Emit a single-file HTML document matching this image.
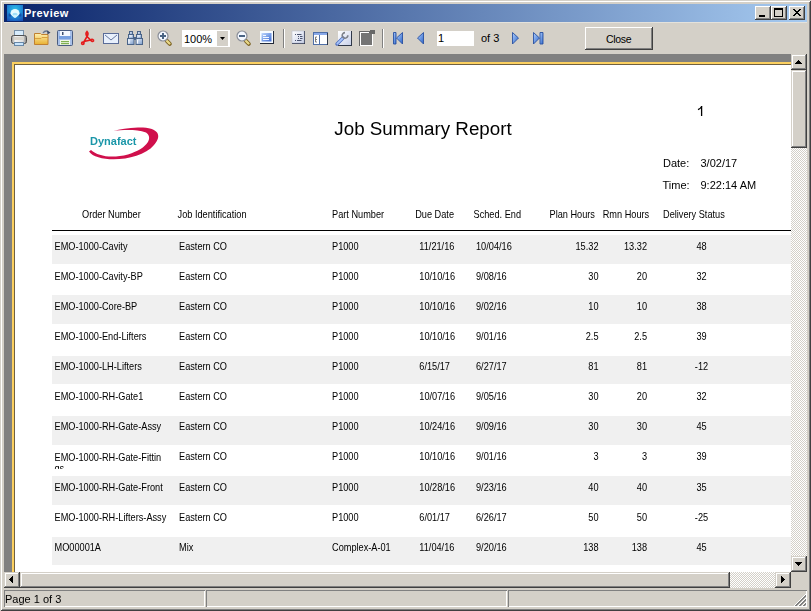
<!DOCTYPE html>
<html><head><meta charset="utf-8">
<style>
*{margin:0;padding:0;box-sizing:border-box}
html,body{width:811px;height:611px;overflow:hidden;background:#d4d0c8;font-family:"Liberation Sans",sans-serif}
.a{position:absolute}
#win{position:absolute;left:0;top:0;width:811px;height:611px;background:#d4d0c8;
 box-shadow: inset 1px 1px 0 #d4d0c8, inset -1px -1px 0 #404040, inset 2px 2px 0 #fff, inset -2px -2px 0 #808080;}
#title{left:4px;top:4px;width:803px;height:18px;background:linear-gradient(to right,#0a246a,#a6caf0)}
#title .t{left:20px;top:2px;color:#fff;font-weight:bold;font-size:11px;line-height:14px;letter-spacing:0.45px}
.cb{width:16px;height:14px;top:2px;background:#d4d0c8;box-shadow: inset -1px -1px 0 #404040, inset 1px 1px 0 #fff, inset -2px -2px 0 #808080}
.sb{background:#d4d0c8;box-shadow: inset -1px -1px 0 #404040, inset 1px 1px 0 #d4d0c8, inset -2px -2px 0 #808080, inset 2px 2px 0 #fff}
.track{background-color:#fff;background-image:linear-gradient(45deg,#d4d0c8 25%,transparent 25%,transparent 75%,#d4d0c8 75%),linear-gradient(45deg,#d4d0c8 25%,transparent 25%,transparent 75%,#d4d0c8 75%);background-size:2px 2px;background-position:0 0,1px 1px}
.sunk{box-shadow: inset 1px 1px 0 #808080, inset -1px -1px 0 #fff}
.tx{position:absolute;white-space:nowrap;color:#000}
.g{background:#f0f0f0}
.ui{position:absolute;font-size:11px;line-height:13px;color:#000;white-space:nowrap}
</style></head><body>
<div id="win">
 <div id="title" class="a">
  <svg class="a" style="left:3px;top:1px" width="16" height="16" viewBox="0 0 16 16">
   <defs><radialGradient id="ig" cx="0.5" cy="0.3" r="0.8"><stop offset="0" stop-color="#30c0e8"/><stop offset="0.5" stop-color="#2090d8"/><stop offset="1" stop-color="#1850b8"/></radialGradient>
   <radialGradient id="ig3" cx="0.5" cy="0.5" r="0.5"><stop offset="0" stop-color="#0c3898" stop-opacity="0.9"/><stop offset="1" stop-color="#0c3898" stop-opacity="0"/></radialGradient></defs>
   <rect x="0" y="0" width="16" height="16" fill="url(#ig)"/>
   <ellipse cx="3" cy="10" rx="2.2" ry="2.8" fill="url(#ig3)"/>
   <ellipse cx="13" cy="10" rx="2.2" ry="2.8" fill="url(#ig3)"/>
   <path d="M3.4 8.6 A4.6 4.6 0 0 1 12.6 8.6 Q12.2 10.6 8 13 Q3.8 10.6 3.4 8.6 Z" fill="#e4faff"/>
   <ellipse cx="8" cy="9.2" rx="2.6" ry="1.5" fill="#a0e0f8"/>
   <ellipse cx="8" cy="11.2" rx="1.8" ry="1.3" fill="#d0f4ff"/>
  </svg>
  <div class="a t">Preview</div>
  <div class="a cb" style="left:751px"><div class="a" style="left:4px;top:9px;width:6px;height:2px;background:#000"></div></div>
  <div class="a cb" style="left:767px"><div class="a" style="left:3px;top:2px;width:9px;height:9px;border:1px solid #000;border-top-width:2px"></div></div>
  <div class="a cb" style="left:785px">
   <svg class="a" style="left:4px;top:3px" width="8" height="7" viewBox="0 0 8 7" shape-rendering="crispEdges">
    <path d="M0 0h2v1h-2zM6 0h2v1h-2zM1 1h2v1h-2zM5 1h2v1h-2zM2 2h4v1h-4zM3 3h2v1h-2zM2 4h4v1h-4zM1 5h2v1h-2zM5 5h2v1h-2zM0 6h2v1h-2zM6 6h2v1h-2z" fill="#000"/>
   </svg>
  </div>
 </div>

 <!-- TOOLBAR -->
 <div class="a" style="left:4px;top:22px;width:803px;height:1px;background:#e4e2dc"></div>
 <svg class="a" style="left:0;top:22px" width="811" height="32" viewBox="0 22 811 32">
  <defs>
   <linearGradient id="gBlue" x1="0" y1="0" x2="1" y2="1"><stop offset="0" stop-color="#f0f6ff"/><stop offset="1" stop-color="#7a9ac8"/></linearGradient>
   <linearGradient id="gFold" x1="0" y1="0" x2="0" y2="1"><stop offset="0" stop-color="#fff0b0"/><stop offset="1" stop-color="#e8b030"/></linearGradient>
   <linearGradient id="gPrn" x1="0" y1="0" x2="1" y2="0"><stop offset="0" stop-color="#909090"/><stop offset="0.25" stop-color="#f4f4f4"/><stop offset="0.75" stop-color="#e0e0e0"/><stop offset="1" stop-color="#808080"/></linearGradient>
   <linearGradient id="gPage" x1="0" y1="0" x2="1" y2="1"><stop offset="0" stop-color="#ffffff"/><stop offset="1" stop-color="#c8d0e8"/></linearGradient>
   <linearGradient id="gScreen" x1="0" y1="0" x2="1" y2="1"><stop offset="0" stop-color="#c0d8fc"/><stop offset="0.5" stop-color="#7aa0e8"/><stop offset="1" stop-color="#3c68d0"/></linearGradient>
   <linearGradient id="gNav" x1="0" y1="0" x2="1" y2="1"><stop offset="0" stop-color="#b0d0ff"/><stop offset="1" stop-color="#2c64c8"/></linearGradient>
  </defs>
  <!-- printer -->
  <rect x="14.5" y="30.5" width="9" height="6" fill="#d8ecfc" stroke="#7890a8"/>
  <rect x="11.5" y="35.5" width="15" height="8" rx="2" fill="url(#gPrn)" stroke="#505050"/>
  <rect x="14" y="37" width="10" height="3" fill="#d8d4cc"/>
  <rect x="14.5" y="42.5" width="9" height="3" fill="#c8e4fc" stroke="#6888a8"/>
  <!-- folder -->
  <path d="M34.5 33.5h6l1 1h6.5v10h-13.5z" fill="url(#gFold)" stroke="#c08030"/>
  <path d="M35 38.5h6l1-1h6" fill="none" stroke="#d8a040"/>
  <path d="M43 33 Q45 30 48.5 31.5" fill="none" stroke="#6a7890" stroke-width="1.3"/>
  <path d="M47 30.5 L50.5 32.5 L47.5 34.5 Z" fill="#3a4a68"/>
  <!-- save -->
  <rect x="57.5" y="30.5" width="15" height="15" rx="1" fill="#a8c0e8" stroke="#4a5c80"/>
  <rect x="60" y="31" width="10" height="5" fill="#f4f8ff"/>
  <rect x="62" y="32" width="1.5" height="3" fill="#405070"/>
  <rect x="59" y="36" width="12" height="3" fill="#78a0e0"/>
  <rect x="60" y="40" width="10" height="5" fill="#f0f8e8"/>
  <rect x="61" y="41" width="8" height="1.2" fill="#80b050"/>
  <rect x="61" y="43" width="8" height="1.2" fill="#80b050"/>
  <!-- pdf -->
  <g fill="none" stroke="#e41c1c" stroke-width="1.6">
   <path d="M87 31.5 C85.5 33 86 35 87 36.5 C88 35 88.5 33 87 31.5 Z"/>
   <path d="M87 36.5 L83 43.5 M87 36.5 L90.5 40 L84 41.5 M90.5 40 C92 38.5 94 39.5 93.5 41 C92.5 42 91 41 90.5 40"/>
   <circle cx="82.8" cy="43.3" r="1.2"/>
  </g>
  <!-- mail -->
  <rect x="103.5" y="33.5" width="15" height="10" fill="#e8f0fc" stroke="#5a6c98"/>
  <path d="M105 35 L111 40 L117 35" fill="none" stroke="#6878a0"/>
  <!-- binoculars -->
  <g fill="url(#gBlue)" stroke="#4a6488" stroke-width="1">
   <rect x="127.5" y="38.5" width="6.5" height="6"/>
   <rect x="128.5" y="34.5" width="5" height="4"/>
   <rect x="129.5" y="31.5" width="3" height="3"/>
   <rect x="136" y="38.5" width="6.5" height="6"/>
   <rect x="136.5" y="34.5" width="5" height="4"/>
   <rect x="137.5" y="31.5" width="3" height="3"/>
  </g>
  <rect x="134" y="37" width="2" height="3" fill="#4a6488"/>
  <path d="M129 40v3.5M137.5 40v3.5M130 36h2M138 36h2" stroke="#fff" stroke-width="1" opacity="0.9"/>
  <!-- separators -->
  <rect x="149" y="29" width="1" height="19" fill="#808080"/><rect x="150" y="29" width="1" height="19" fill="#fff"/>
  <rect x="283" y="29" width="1" height="19" fill="#808080"/><rect x="284" y="29" width="1" height="19" fill="#fff"/>
  <rect x="382" y="29" width="1" height="19" fill="#808080"/><rect x="383" y="29" width="1" height="19" fill="#fff"/>
  <!-- zoom in -->
  <path d="M167 41 L169.8 43.8" stroke="#7a6020" stroke-width="4" stroke-linecap="round"/>
  <path d="M167 41 L169.5 43.5" stroke="#e8d888" stroke-width="2.4" stroke-linecap="round"/>
  <circle cx="163" cy="36" r="5" fill="#f4f8ff" stroke="#8a8e98" stroke-width="1.2"/>
  <path d="M160 36h6M163 33v6" stroke="#4a6484" stroke-width="2"/>
  <!-- combo -->
  <rect x="182" y="30" width="48" height="17" fill="#fff"/>
  <rect x="217" y="31" width="11" height="15" fill="#d4d0c8"/>
  <path d="M220 37h5l-2.5 3z" fill="#000"/>
  <!-- zoom out -->
  <path d="M246 41 L248.8 43.8" stroke="#7a6020" stroke-width="4" stroke-linecap="round"/>
  <path d="M246 41 L248.5 43.5" stroke="#e8d888" stroke-width="2.4" stroke-linecap="round"/>
  <circle cx="242" cy="36" r="5" fill="#f4f8ff" stroke="#8a8e98" stroke-width="1.2"/>
  <path d="M239 36h6" stroke="#4a6484" stroke-width="2"/>
  <!-- page view -->
  <rect x="260" y="31" width="14" height="13" fill="#202838"/>
  <rect x="260" y="31" width="13" height="12" fill="#f8fcff"/>
  <rect x="261.5" y="33" width="10" height="8.5" fill="url(#gScreen)"/>
  <path d="M263 35.5h3M263 37.5h6M263 39.5h6" stroke="#f4f8ff" stroke-width="1"/>
  <!-- list page -->
  <rect x="292" y="31" width="13" height="13" fill="#283048"/>
  <rect x="292" y="31" width="12" height="12" fill="url(#gPage)" stroke="#b8c0d0" stroke-width="0.6"/>
  <path d="M295 34.5h1M297 34.5h4.5M298 36.5h1M300 36.5h2.5M298 38.5h1M300 38.5h2.5M295 40.5h1M297 40.5h4.5" stroke="#4a5470" stroke-width="1"/>
  <!-- two col -->
  <rect x="313.5" y="32.5" width="14" height="12" fill="#fff" stroke="#5070a8"/>
  <rect x="314" y="33" width="13" height="2" fill="#88a8e8"/>
  <rect x="319" y="35" width="1" height="9" fill="#5070a8"/>
  <path d="M315.5 37v5M315.5 37h1.5M315.5 39.5h1.5M315.5 42h1.5" stroke="#707070" stroke-width="0.9"/>
  <rect x="327" y="33" width="1" height="12" fill="#303848"/>
  <!-- wrench page -->
  <rect x="338" y="31" width="14" height="15" fill="#303848"/>
  <rect x="338" y="31" width="13" height="14" fill="url(#gPage)"/>
  <path d="M337 44 L343 38" stroke="#5070c0" stroke-width="3.4" stroke-linecap="round"/>
  <path d="M337.3 43.7 L343 38" stroke="#a8c4f8" stroke-width="1.8" stroke-linecap="round"/>
  <path d="M347.8 35.2 A2.8 2.8 0 1 1 345 32.6" fill="none" stroke="#7c8088" stroke-width="1.6"/>
  <!-- grey square -->
  <rect x="359" y="31" width="13" height="15" fill="#686868"/>
  <rect x="360" y="32" width="9" height="13" fill="#fff"/>
  <rect x="361" y="33" width="11" height="12" fill="#747474"/>
  <rect x="370" y="30" width="5" height="4" fill="#686868"/>
  <rect x="372" y="34" width="1" height="12" fill="#fff"/>
  <rect x="360" y="45" width="13" height="1" fill="#fff"/>
  <!-- nav -->
  <g fill="url(#gNav)" stroke="#2850a0" stroke-width="0.9" stroke-linejoin="round">
   <rect x="393.5" y="32.5" width="2.5" height="11.5"/>
   <path d="M396.5 38 L402.5 32.5 V44 Z"/>
   <path d="M417.5 38 L423.5 32.5 V44 Z"/>
   <path d="M512.5 32.5 L518.5 38 L512.5 44 Z"/>
   <path d="M533.5 32.5 L539.5 38 L533.5 44 Z"/>
   <rect x="540" y="32.5" width="3" height="11.5"/>
  </g>
  <!-- page box -->
  <rect x="437" y="31" width="37" height="15" fill="#fff"/>
  <!-- close button -->
  <rect x="585" y="27" width="68" height="23" fill="#404040"/>
  <rect x="585" y="27" width="67" height="22" fill="#fff"/>
  <rect x="586" y="28" width="66" height="21" fill="#808080"/>
  <rect x="586" y="28" width="65" height="20" fill="#d4d0c8"/>
 </svg>
 <div class="ui" style="left:184px;top:33px">100%</div>
 <div class="ui" style="left:438px;top:32px">1</div>
 <div class="ui" style="left:481px;top:32px">of 3</div>
 <div class="ui" style="left:606px;top:33px;font-size:10.5px;letter-spacing:-0.3px">Close</div>

 <!-- canvas -->
 <div class="a" style="left:4px;top:54px;width:787px;height:518px;background:#808080"></div>
 <div class="a" style="left:12px;top:62px;width:779px;height:510px;background:#fcd060"></div>
 <div class="a" style="left:14px;top:64px;width:777px;height:508px;background:#706040"></div>
 <div class="a" style="left:15px;top:65px;width:776px;height:507px;background:#fff;overflow:hidden">
  <div class="a" style="left:-15px;top:-65px;width:811px;height:611px;will-change:transform">
<div class="a g" style="left:52px;top:235.00px;width:739px;height:28.8px"></div>
<div class="a g" style="left:52px;top:295.34px;width:739px;height:28.8px"></div>
<div class="a g" style="left:52px;top:355.68px;width:739px;height:28.8px"></div>
<div class="a g" style="left:52px;top:416.02px;width:739px;height:28.8px"></div>
<div class="a g" style="left:52px;top:476.36px;width:739px;height:28.8px"></div>
<div class="a g" style="left:52px;top:536.70px;width:739px;height:28.8px"></div>
<div class="a" style="left:52px;top:230px;width:739px;height:1.4px;background:#000"></div>
<div class="tx " style="left:82.00px;top:211.01px;font-size:9.2px;line-height:9.2px;transform:scaleY(1.12);transform-origin:0 7.79px;">Order Number</div>
<div class="tx " style="left:177.60px;top:211.01px;font-size:9.2px;line-height:9.2px;transform:scaleY(1.12);transform-origin:0 7.79px;">Job Identification</div>
<div class="tx " style="left:332.00px;top:211.01px;font-size:9.2px;line-height:9.2px;transform:scaleY(1.12);transform-origin:0 7.79px;">Part Number</div>
<div class="tx " style="left:415.20px;top:211.01px;font-size:9.2px;line-height:9.2px;transform:scaleY(1.12);transform-origin:0 7.79px;">Due Date</div>
<div class="tx " style="left:473.50px;top:211.01px;font-size:9.2px;line-height:9.2px;transform:scaleY(1.12);transform-origin:0 7.79px;">Sched. End</div>
<div class="tx " style="left:549.50px;top:211.01px;font-size:9.2px;line-height:9.2px;transform:scaleY(1.12);transform-origin:0 7.79px;">Plan Hours</div>
<div class="tx " style="left:602.70px;top:211.01px;font-size:9.2px;line-height:9.2px;transform:scaleY(1.12);transform-origin:0 7.79px;">Rmn Hours</div>
<div class="tx " style="left:663.00px;top:211.01px;font-size:9.2px;line-height:9.2px;transform:scaleY(1.12);transform-origin:0 7.79px;">Delivery Status</div>
<div class="tx " style="left:54.50px;top:242.71px;font-size:9.2px;line-height:9.2px;transform:scaleY(1.12);transform-origin:0 7.79px;">EMO-1000-Cavity</div>
<div class="tx " style="left:179.00px;top:242.71px;font-size:9.2px;line-height:9.2px;transform:scaleY(1.12);transform-origin:0 7.79px;">Eastern CO</div>
<div class="tx " style="left:332.00px;top:242.71px;font-size:9.2px;line-height:9.2px;transform:scaleY(1.12);transform-origin:0 7.79px;">P1000</div>
<div class="tx " style="left:419.30px;top:242.71px;font-size:9.2px;line-height:9.2px;transform:scaleY(1.12);transform-origin:0 7.79px;">11/21/16</div>
<div class="tx " style="left:476.00px;top:242.71px;font-size:9.2px;line-height:9.2px;transform:scaleY(1.12);transform-origin:0 7.79px;">10/04/16</div>
<div class="tx" style="right:212.50px;top:242.71px;font-size:9.2px;line-height:9.2px;text-align:right;transform:scaleY(1.12);transform-origin:0 7.79px;">15.32</div>
<div class="tx" style="right:164.00px;top:242.71px;font-size:9.2px;line-height:9.2px;text-align:right;transform:scaleY(1.12);transform-origin:0 7.79px;">13.32</div>
<div class="tx" style="left:651.50px;width:100px;top:242.71px;font-size:9.2px;line-height:9.2px;text-align:center;transform:scaleY(1.12);transform-origin:0 7.79px;">48</div>
<div class="tx " style="left:54.50px;top:272.82px;font-size:9.2px;line-height:9.2px;transform:scaleY(1.12);transform-origin:0 7.79px;">EMO-1000-Cavity-BP</div>
<div class="tx " style="left:179.00px;top:272.82px;font-size:9.2px;line-height:9.2px;transform:scaleY(1.12);transform-origin:0 7.79px;">Eastern CO</div>
<div class="tx " style="left:332.00px;top:272.82px;font-size:9.2px;line-height:9.2px;transform:scaleY(1.12);transform-origin:0 7.79px;">P1000</div>
<div class="tx " style="left:419.30px;top:272.82px;font-size:9.2px;line-height:9.2px;transform:scaleY(1.12);transform-origin:0 7.79px;">10/10/16</div>
<div class="tx " style="left:476.00px;top:272.82px;font-size:9.2px;line-height:9.2px;transform:scaleY(1.12);transform-origin:0 7.79px;">9/08/16</div>
<div class="tx" style="right:212.50px;top:272.82px;font-size:9.2px;line-height:9.2px;text-align:right;transform:scaleY(1.12);transform-origin:0 7.79px;">30</div>
<div class="tx" style="right:164.00px;top:272.82px;font-size:9.2px;line-height:9.2px;text-align:right;transform:scaleY(1.12);transform-origin:0 7.79px;">20</div>
<div class="tx" style="left:651.50px;width:100px;top:272.82px;font-size:9.2px;line-height:9.2px;text-align:center;transform:scaleY(1.12);transform-origin:0 7.79px;">32</div>
<div class="tx " style="left:54.50px;top:302.93px;font-size:9.2px;line-height:9.2px;transform:scaleY(1.12);transform-origin:0 7.79px;">EMO-1000-Core-BP</div>
<div class="tx " style="left:179.00px;top:302.93px;font-size:9.2px;line-height:9.2px;transform:scaleY(1.12);transform-origin:0 7.79px;">Eastern CO</div>
<div class="tx " style="left:332.00px;top:302.93px;font-size:9.2px;line-height:9.2px;transform:scaleY(1.12);transform-origin:0 7.79px;">P1000</div>
<div class="tx " style="left:419.30px;top:302.93px;font-size:9.2px;line-height:9.2px;transform:scaleY(1.12);transform-origin:0 7.79px;">10/10/16</div>
<div class="tx " style="left:476.00px;top:302.93px;font-size:9.2px;line-height:9.2px;transform:scaleY(1.12);transform-origin:0 7.79px;">9/02/16</div>
<div class="tx" style="right:212.50px;top:302.93px;font-size:9.2px;line-height:9.2px;text-align:right;transform:scaleY(1.12);transform-origin:0 7.79px;">10</div>
<div class="tx" style="right:164.00px;top:302.93px;font-size:9.2px;line-height:9.2px;text-align:right;transform:scaleY(1.12);transform-origin:0 7.79px;">10</div>
<div class="tx" style="left:651.50px;width:100px;top:302.93px;font-size:9.2px;line-height:9.2px;text-align:center;transform:scaleY(1.12);transform-origin:0 7.79px;">38</div>
<div class="tx " style="left:54.50px;top:333.04px;font-size:9.2px;line-height:9.2px;transform:scaleY(1.12);transform-origin:0 7.79px;">EMO-1000-End-Lifters</div>
<div class="tx " style="left:179.00px;top:333.04px;font-size:9.2px;line-height:9.2px;transform:scaleY(1.12);transform-origin:0 7.79px;">Eastern CO</div>
<div class="tx " style="left:332.00px;top:333.04px;font-size:9.2px;line-height:9.2px;transform:scaleY(1.12);transform-origin:0 7.79px;">P1000</div>
<div class="tx " style="left:419.30px;top:333.04px;font-size:9.2px;line-height:9.2px;transform:scaleY(1.12);transform-origin:0 7.79px;">10/10/16</div>
<div class="tx " style="left:476.00px;top:333.04px;font-size:9.2px;line-height:9.2px;transform:scaleY(1.12);transform-origin:0 7.79px;">9/01/16</div>
<div class="tx" style="right:212.50px;top:333.04px;font-size:9.2px;line-height:9.2px;text-align:right;transform:scaleY(1.12);transform-origin:0 7.79px;">2.5</div>
<div class="tx" style="right:164.00px;top:333.04px;font-size:9.2px;line-height:9.2px;text-align:right;transform:scaleY(1.12);transform-origin:0 7.79px;">2.5</div>
<div class="tx" style="left:651.50px;width:100px;top:333.04px;font-size:9.2px;line-height:9.2px;text-align:center;transform:scaleY(1.12);transform-origin:0 7.79px;">39</div>
<div class="tx " style="left:54.50px;top:363.15px;font-size:9.2px;line-height:9.2px;transform:scaleY(1.12);transform-origin:0 7.79px;">EMO-1000-LH-Lifters</div>
<div class="tx " style="left:179.00px;top:363.15px;font-size:9.2px;line-height:9.2px;transform:scaleY(1.12);transform-origin:0 7.79px;">Eastern CO</div>
<div class="tx " style="left:332.00px;top:363.15px;font-size:9.2px;line-height:9.2px;transform:scaleY(1.12);transform-origin:0 7.79px;">P1000</div>
<div class="tx " style="left:419.30px;top:363.15px;font-size:9.2px;line-height:9.2px;transform:scaleY(1.12);transform-origin:0 7.79px;">6/15/17</div>
<div class="tx " style="left:476.00px;top:363.15px;font-size:9.2px;line-height:9.2px;transform:scaleY(1.12);transform-origin:0 7.79px;">6/27/17</div>
<div class="tx" style="right:212.50px;top:363.15px;font-size:9.2px;line-height:9.2px;text-align:right;transform:scaleY(1.12);transform-origin:0 7.79px;">81</div>
<div class="tx" style="right:164.00px;top:363.15px;font-size:9.2px;line-height:9.2px;text-align:right;transform:scaleY(1.12);transform-origin:0 7.79px;">81</div>
<div class="tx" style="left:651.50px;width:100px;top:363.15px;font-size:9.2px;line-height:9.2px;text-align:center;transform:scaleY(1.12);transform-origin:0 7.79px;">-12</div>
<div class="tx " style="left:54.50px;top:393.26px;font-size:9.2px;line-height:9.2px;transform:scaleY(1.12);transform-origin:0 7.79px;">EMO-1000-RH-Gate1</div>
<div class="tx " style="left:179.00px;top:393.26px;font-size:9.2px;line-height:9.2px;transform:scaleY(1.12);transform-origin:0 7.79px;">Eastern CO</div>
<div class="tx " style="left:332.00px;top:393.26px;font-size:9.2px;line-height:9.2px;transform:scaleY(1.12);transform-origin:0 7.79px;">P1000</div>
<div class="tx " style="left:419.30px;top:393.26px;font-size:9.2px;line-height:9.2px;transform:scaleY(1.12);transform-origin:0 7.79px;">10/07/16</div>
<div class="tx " style="left:476.00px;top:393.26px;font-size:9.2px;line-height:9.2px;transform:scaleY(1.12);transform-origin:0 7.79px;">9/05/16</div>
<div class="tx" style="right:212.50px;top:393.26px;font-size:9.2px;line-height:9.2px;text-align:right;transform:scaleY(1.12);transform-origin:0 7.79px;">30</div>
<div class="tx" style="right:164.00px;top:393.26px;font-size:9.2px;line-height:9.2px;text-align:right;transform:scaleY(1.12);transform-origin:0 7.79px;">20</div>
<div class="tx" style="left:651.50px;width:100px;top:393.26px;font-size:9.2px;line-height:9.2px;text-align:center;transform:scaleY(1.12);transform-origin:0 7.79px;">32</div>
<div class="tx " style="left:54.50px;top:423.37px;font-size:9.2px;line-height:9.2px;transform:scaleY(1.12);transform-origin:0 7.79px;">EMO-1000-RH-Gate-Assy</div>
<div class="tx " style="left:179.00px;top:423.37px;font-size:9.2px;line-height:9.2px;transform:scaleY(1.12);transform-origin:0 7.79px;">Eastern CO</div>
<div class="tx " style="left:332.00px;top:423.37px;font-size:9.2px;line-height:9.2px;transform:scaleY(1.12);transform-origin:0 7.79px;">P1000</div>
<div class="tx " style="left:419.30px;top:423.37px;font-size:9.2px;line-height:9.2px;transform:scaleY(1.12);transform-origin:0 7.79px;">10/24/16</div>
<div class="tx " style="left:476.00px;top:423.37px;font-size:9.2px;line-height:9.2px;transform:scaleY(1.12);transform-origin:0 7.79px;">9/09/16</div>
<div class="tx" style="right:212.50px;top:423.37px;font-size:9.2px;line-height:9.2px;text-align:right;transform:scaleY(1.12);transform-origin:0 7.79px;">30</div>
<div class="tx" style="right:164.00px;top:423.37px;font-size:9.2px;line-height:9.2px;text-align:right;transform:scaleY(1.12);transform-origin:0 7.79px;">30</div>
<div class="tx" style="left:651.50px;width:100px;top:423.37px;font-size:9.2px;line-height:9.2px;text-align:center;transform:scaleY(1.12);transform-origin:0 7.79px;">45</div>
<div class="a" style="left:50px;top:449.27px;width:120px;height:19.73px;overflow:hidden"><div class="tx" style="left:4.5px;top:4.21px;font-size:9.2px;line-height:10px;transform:scaleY(1.12);transform-origin:0 7.79px;">EMO-1000-RH-Gate-Fittin<br>gs</div></div>
<div class="tx " style="left:179.00px;top:453.48px;font-size:9.2px;line-height:9.2px;transform:scaleY(1.12);transform-origin:0 7.79px;">Eastern CO</div>
<div class="tx " style="left:332.00px;top:453.48px;font-size:9.2px;line-height:9.2px;transform:scaleY(1.12);transform-origin:0 7.79px;">P1000</div>
<div class="tx " style="left:419.30px;top:453.48px;font-size:9.2px;line-height:9.2px;transform:scaleY(1.12);transform-origin:0 7.79px;">10/10/16</div>
<div class="tx " style="left:476.00px;top:453.48px;font-size:9.2px;line-height:9.2px;transform:scaleY(1.12);transform-origin:0 7.79px;">9/01/16</div>
<div class="tx" style="right:212.50px;top:453.48px;font-size:9.2px;line-height:9.2px;text-align:right;transform:scaleY(1.12);transform-origin:0 7.79px;">3</div>
<div class="tx" style="right:164.00px;top:453.48px;font-size:9.2px;line-height:9.2px;text-align:right;transform:scaleY(1.12);transform-origin:0 7.79px;">3</div>
<div class="tx" style="left:651.50px;width:100px;top:453.48px;font-size:9.2px;line-height:9.2px;text-align:center;transform:scaleY(1.12);transform-origin:0 7.79px;">39</div>
<div class="tx " style="left:54.50px;top:483.59px;font-size:9.2px;line-height:9.2px;transform:scaleY(1.12);transform-origin:0 7.79px;">EMO-1000-RH-Gate-Front</div>
<div class="tx " style="left:179.00px;top:483.59px;font-size:9.2px;line-height:9.2px;transform:scaleY(1.12);transform-origin:0 7.79px;">Eastern CO</div>
<div class="tx " style="left:332.00px;top:483.59px;font-size:9.2px;line-height:9.2px;transform:scaleY(1.12);transform-origin:0 7.79px;">P1000</div>
<div class="tx " style="left:419.30px;top:483.59px;font-size:9.2px;line-height:9.2px;transform:scaleY(1.12);transform-origin:0 7.79px;">10/28/16</div>
<div class="tx " style="left:476.00px;top:483.59px;font-size:9.2px;line-height:9.2px;transform:scaleY(1.12);transform-origin:0 7.79px;">9/23/16</div>
<div class="tx" style="right:212.50px;top:483.59px;font-size:9.2px;line-height:9.2px;text-align:right;transform:scaleY(1.12);transform-origin:0 7.79px;">40</div>
<div class="tx" style="right:164.00px;top:483.59px;font-size:9.2px;line-height:9.2px;text-align:right;transform:scaleY(1.12);transform-origin:0 7.79px;">40</div>
<div class="tx" style="left:651.50px;width:100px;top:483.59px;font-size:9.2px;line-height:9.2px;text-align:center;transform:scaleY(1.12);transform-origin:0 7.79px;">35</div>
<div class="tx " style="left:54.50px;top:513.70px;font-size:9.2px;line-height:9.2px;transform:scaleY(1.12);transform-origin:0 7.79px;">EMO-1000-RH-Lifters-Assy</div>
<div class="tx " style="left:179.00px;top:513.70px;font-size:9.2px;line-height:9.2px;transform:scaleY(1.12);transform-origin:0 7.79px;">Eastern CO</div>
<div class="tx " style="left:332.00px;top:513.70px;font-size:9.2px;line-height:9.2px;transform:scaleY(1.12);transform-origin:0 7.79px;">P1000</div>
<div class="tx " style="left:419.30px;top:513.70px;font-size:9.2px;line-height:9.2px;transform:scaleY(1.12);transform-origin:0 7.79px;">6/01/17</div>
<div class="tx " style="left:476.00px;top:513.70px;font-size:9.2px;line-height:9.2px;transform:scaleY(1.12);transform-origin:0 7.79px;">6/26/17</div>
<div class="tx" style="right:212.50px;top:513.70px;font-size:9.2px;line-height:9.2px;text-align:right;transform:scaleY(1.12);transform-origin:0 7.79px;">50</div>
<div class="tx" style="right:164.00px;top:513.70px;font-size:9.2px;line-height:9.2px;text-align:right;transform:scaleY(1.12);transform-origin:0 7.79px;">50</div>
<div class="tx" style="left:651.50px;width:100px;top:513.70px;font-size:9.2px;line-height:9.2px;text-align:center;transform:scaleY(1.12);transform-origin:0 7.79px;">-25</div>
<div class="tx " style="left:54.50px;top:543.81px;font-size:9.2px;line-height:9.2px;transform:scaleY(1.12);transform-origin:0 7.79px;">MO00001A</div>
<div class="tx " style="left:179.00px;top:543.81px;font-size:9.2px;line-height:9.2px;transform:scaleY(1.12);transform-origin:0 7.79px;">Mix</div>
<div class="tx " style="left:332.00px;top:543.81px;font-size:9.2px;line-height:9.2px;transform:scaleY(1.12);transform-origin:0 7.79px;">Complex-A-01</div>
<div class="tx " style="left:419.30px;top:543.81px;font-size:9.2px;line-height:9.2px;transform:scaleY(1.12);transform-origin:0 7.79px;">11/04/16</div>
<div class="tx " style="left:476.00px;top:543.81px;font-size:9.2px;line-height:9.2px;transform:scaleY(1.12);transform-origin:0 7.79px;">9/20/16</div>
<div class="tx" style="right:212.50px;top:543.81px;font-size:9.2px;line-height:9.2px;text-align:right;transform:scaleY(1.12);transform-origin:0 7.79px;">138</div>
<div class="tx" style="right:164.00px;top:543.81px;font-size:9.2px;line-height:9.2px;text-align:right;transform:scaleY(1.12);transform-origin:0 7.79px;">138</div>
<div class="tx" style="left:651.50px;width:100px;top:543.81px;font-size:9.2px;line-height:9.2px;text-align:center;transform:scaleY(1.12);transform-origin:0 7.79px;">45</div>
<div class="tx " style="left:334.30px;top:119.89px;font-size:18.8px;line-height:18.8px;">Job Summary Report</div>
<svg class="a" style="left:690px;top:100px" width="20" height="20" viewBox="690 100 20 20"><path d="M701.6 106 V116" stroke="#000" stroke-width="1.3"/><path d="M698 109.6 C700 108.8 701 107.6 701.8 106.2" fill="none" stroke="#000" stroke-width="1.2"/></svg>
<div class="tx " style="left:663.00px;top:157.69px;font-size:11px;line-height:11px;">Date:</div>
<div class="tx " style="left:700.50px;top:157.69px;font-size:11px;line-height:11px;">3/02/17</div>
<div class="tx " style="left:662.50px;top:179.99px;font-size:11px;line-height:11px;">Time:</div>
<div class="tx " style="left:700.50px;top:179.99px;font-size:11px;line-height:11px;">9:22:14 AM</div>
<svg class="a" style="left:0;top:0" width="811" height="611" viewBox="0 0 811 611"><path d="M89 151.5 C97 163.5, 140 162, 154 145 C163 135, 158 127, 138 127.5 C128 128, 120 129, 113 131 C122 130, 136 129, 146 132.5 C153 137, 149 148, 128 154.5 C112 158.5, 98 156.5, 91 150 Z" fill="#d0104c"/></svg>
<div class="tx " style="left:90.00px;top:135.89px;font-size:11px;line-height:11px;font-weight:bold;color:#1a96a8">Dynafact</div>

  </div>
 </div>

 <!-- vertical scrollbar -->
 <div class="a track" style="left:791px;top:54px;width:16px;height:518px"></div>
 <div class="a sb" style="left:791px;top:54px;width:16px;height:16px"><svg class="a" style="left:4px;top:6px" width="7" height="4"><path d="M3 0h1v1h1v1h1v1h1v1h-7v-1h1v-1h1v-1h1z" fill="#000"/></svg></div>
 <div class="a sb" style="left:791px;top:70px;width:16px;height:78px"></div>
 <div class="a sb" style="left:791px;top:556px;width:16px;height:16px"><svg class="a" style="left:4px;top:6px" width="7" height="4"><path d="M0 0h7v1h-1v1h-1v1h-1v1h-1v-1h-1v-1h-1v-1h-1z" fill="#000"/></svg></div>
 <!-- horizontal scrollbar -->
 <div class="a track" style="left:4px;top:572px;width:787px;height:16px"></div>
 <div class="a sb" style="left:4px;top:572px;width:16px;height:16px"><svg class="a" style="left:5px;top:4px" width="4" height="7"><path d="M3 0h1v7h-1v-1h-1v-1h-1v-1h-1v-1h1v-1h1v-1h1z" fill="#000"/></svg></div>
 <div class="a sb" style="left:20px;top:572px;width:710px;height:16px"></div>
 <div class="a sb" style="left:775px;top:572px;width:16px;height:16px"><svg class="a" style="left:6px;top:4px" width="4" height="7"><path d="M0 0h1v1h1v1h1v1h1v1h-1v1h-1v1h-1v1h-1z" fill="#000"/></svg></div>
 <!-- status bar -->
 <div class="a sunk" style="left:4px;top:590px;width:201px;height:17px"></div>
 <div class="a sunk" style="left:206px;top:590px;width:301px;height:17px"></div>
 <div class="a sunk" style="left:508px;top:590px;width:299px;height:17px"></div>
 <svg class="a" style="left:0;top:0" width="811" height="611" viewBox="0 0 811 611" shape-rendering="crispEdges"><rect x="805" y="604" width="1" height="1" fill="#808080"/><rect x="804" y="605" width="1" height="1" fill="#808080"/><rect x="805" y="603" width="1" height="1" fill="#808080"/><rect x="804" y="604" width="1" height="1" fill="#808080"/><rect x="803" y="605" width="1" height="1" fill="#808080"/><rect x="805" y="602" width="1" height="1" fill="#ffffff"/><rect x="804" y="603" width="1" height="1" fill="#ffffff"/><rect x="803" y="604" width="1" height="1" fill="#ffffff"/><rect x="802" y="605" width="1" height="1" fill="#ffffff"/><rect x="805" y="600" width="1" height="1" fill="#808080"/><rect x="804" y="601" width="1" height="1" fill="#808080"/><rect x="803" y="602" width="1" height="1" fill="#808080"/><rect x="802" y="603" width="1" height="1" fill="#808080"/><rect x="801" y="604" width="1" height="1" fill="#808080"/><rect x="800" y="605" width="1" height="1" fill="#808080"/><rect x="805" y="599" width="1" height="1" fill="#808080"/><rect x="804" y="600" width="1" height="1" fill="#808080"/><rect x="803" y="601" width="1" height="1" fill="#808080"/><rect x="802" y="602" width="1" height="1" fill="#808080"/><rect x="801" y="603" width="1" height="1" fill="#808080"/><rect x="800" y="604" width="1" height="1" fill="#808080"/><rect x="799" y="605" width="1" height="1" fill="#808080"/><rect x="805" y="598" width="1" height="1" fill="#ffffff"/><rect x="804" y="599" width="1" height="1" fill="#ffffff"/><rect x="803" y="600" width="1" height="1" fill="#ffffff"/><rect x="802" y="601" width="1" height="1" fill="#ffffff"/><rect x="801" y="602" width="1" height="1" fill="#ffffff"/><rect x="800" y="603" width="1" height="1" fill="#ffffff"/><rect x="799" y="604" width="1" height="1" fill="#ffffff"/><rect x="798" y="605" width="1" height="1" fill="#ffffff"/><rect x="805" y="596" width="1" height="1" fill="#808080"/><rect x="804" y="597" width="1" height="1" fill="#808080"/><rect x="803" y="598" width="1" height="1" fill="#808080"/><rect x="802" y="599" width="1" height="1" fill="#808080"/><rect x="801" y="600" width="1" height="1" fill="#808080"/><rect x="800" y="601" width="1" height="1" fill="#808080"/><rect x="799" y="602" width="1" height="1" fill="#808080"/><rect x="798" y="603" width="1" height="1" fill="#808080"/><rect x="797" y="604" width="1" height="1" fill="#808080"/><rect x="796" y="605" width="1" height="1" fill="#808080"/><rect x="805" y="595" width="1" height="1" fill="#808080"/><rect x="804" y="596" width="1" height="1" fill="#808080"/><rect x="803" y="597" width="1" height="1" fill="#808080"/><rect x="802" y="598" width="1" height="1" fill="#808080"/><rect x="801" y="599" width="1" height="1" fill="#808080"/><rect x="800" y="600" width="1" height="1" fill="#808080"/><rect x="799" y="601" width="1" height="1" fill="#808080"/><rect x="798" y="602" width="1" height="1" fill="#808080"/><rect x="797" y="603" width="1" height="1" fill="#808080"/><rect x="796" y="604" width="1" height="1" fill="#808080"/><rect x="795" y="605" width="1" height="1" fill="#808080"/><rect x="805" y="594" width="1" height="1" fill="#ffffff"/><rect x="804" y="595" width="1" height="1" fill="#ffffff"/><rect x="803" y="596" width="1" height="1" fill="#ffffff"/><rect x="802" y="597" width="1" height="1" fill="#ffffff"/><rect x="801" y="598" width="1" height="1" fill="#ffffff"/><rect x="800" y="599" width="1" height="1" fill="#ffffff"/><rect x="799" y="600" width="1" height="1" fill="#ffffff"/><rect x="798" y="601" width="1" height="1" fill="#ffffff"/><rect x="797" y="602" width="1" height="1" fill="#ffffff"/><rect x="796" y="603" width="1" height="1" fill="#ffffff"/><rect x="795" y="604" width="1" height="1" fill="#ffffff"/><rect x="794" y="605" width="1" height="1" fill="#ffffff"/></svg>
 <div class="ui" style="left:5px;top:593px">Page 1 of 3</div>
</div>
</body></html>
